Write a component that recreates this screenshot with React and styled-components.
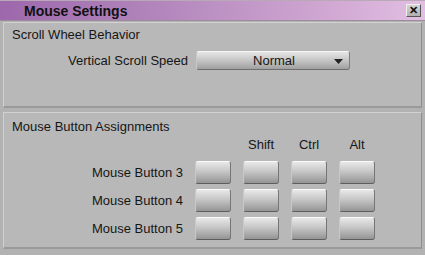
import React from "react";
import styled, { createGlobalStyle } from "styled-components";

const Global = createGlobalStyle`
  html, body { margin: 0; padding: 0; background: #b4b4b4; }
  body { font-family: "Liberation Sans", Arial, sans-serif; }
`;

const Window = styled.div`
  width: 425px;
  height: 255px;
  display: flex;
  flex-direction: column;
  background: #b2b2b2;
  box-sizing: border-box;
  overflow: hidden;
`;

const TitleBar = styled.div`
  height: 21px;
  box-sizing: border-box;
  border-top: 1px solid #b8a8b8;
  border-bottom: 1px solid #9c8c9c;
  background: linear-gradient(90deg, #9d68ac 0%, #b488bd 40%, #d2aad4 80%, #e2bfe2 100%);
  display: flex;
  align-items: center;
  justify-content: space-between;
  padding: 0 4px 0 24px;
`;

const Title = styled.span`
  font-weight: bold;
  font-size: 14px;
  color: #111;
`;

const CloseButton = styled.div`
  width: 15px;
  height: 13px;
  box-sizing: border-box;
  background: linear-gradient(#d4d4d4, #b0b0b0);
  border-top: 1px solid #efefef;
  border-left: 1px solid #efefef;
  border-right: 1px solid #555;
  border-bottom: 1px solid #555;
  display: flex;
  align-items: center;
  justify-content: center;
  font-size: 11px;
  font-weight: bold;
  line-height: 1;
  color: #111;
`;

const Body = styled.div`
  flex: 1;
  display: flex;
  flex-direction: column;
  gap: 4px;
  padding: 1px 3px 6px 3px;
`;

const Panel = styled.div`
  box-sizing: border-box;
  background: #b8b8b8;
  border-top: 1px solid #d2d2d2;
  border-left: 1px solid #d0d0d0;
  border-right: 1px solid #8e8e8e;
  border-bottom: 2px solid #9a9a9a;
  height: ${(p) => p.$h || "auto"};
  flex: ${(p) => (p.$grow ? 1 : "none")};
  padding: ${(p) => p.$pt || "5px"} 0 0 8px;
`;

const Heading = styled.div`
  font-size: 13px;
  line-height: 14px;
  color: #161616;
`;

const SpeedRow = styled.div`
  display: flex;
  align-items: center;
  margin-top: 9px;
`;

const Label = styled.div`
  width: ${(p) => p.$w || "auto"};
  text-align: right;
  font-size: 13px;
  line-height: 14px;
  color: #161616;
`;

const Dropdown = styled.div`
  margin-left: 8px;
  width: 154px;
  height: 19px;
  box-sizing: border-box;
  border-radius: 3px;
  background: linear-gradient(#e6e6e6 0%, #c8c8c8 45%, #a0a0a0 100%);
  border-top: 1px solid #f4f4f4;
  border-left: 1px solid #c8c8c8;
  border-right: 1px solid #7e7e7e;
  border-bottom: 1px solid #6e6e6e;
  display: flex;
  align-items: center;
  position: relative;
  font-size: 13px;
  color: #161616;
`;

const DropText = styled.span`
  flex: 1;
  text-align: center;
  padding-left: 2px;
`;

const Arrow = styled.svg`
  position: absolute;
  right: 6px;
  top: 7px;
`;

const Grid = styled.div`
  display: grid;
  grid-template-columns: 171px repeat(4, 36px);
  column-gap: 12px;
  row-gap: 5px;
  margin-top: 4px;
  align-items: center;
`;

const ColHead = styled.div`
  font-size: 13px;
  line-height: 14px;
  color: #161616;
  text-align: center;
  margin-bottom: 4px;
`;

const KeyButton = styled.div`
  height: 23px;
  box-sizing: border-box;
  border-radius: 3px;
  background: linear-gradient(#e8e8e8 0%, #c6c6c6 45%, #959595 100%);
  border-top: 1px solid #fafafa;
  border-left: 1px solid #c8c8c8;
  border-right: 1px solid #767676;
  border-bottom: 1px solid #5e5e5e;
`;

const rows = ["Mouse Button 3", "Mouse Button 4", "Mouse Button 5"];
const heads = ["", "Shift", "Ctrl", "Alt"];

export default function App() {
  return (
    <>
      <Global />
      <Window>
        <TitleBar>
          <Title>Mouse Settings</Title>
          <CloseButton>✕</CloseButton>
        </TitleBar>
        <Body>
          <Panel $h="86px">
            <Heading>Scroll Wheel Behavior</Heading>
            <SpeedRow>
              <Label $w="176px">Vertical Scroll Speed</Label>
              <Dropdown>
                <DropText>Normal</DropText>
                <Arrow width="9" height="5" viewBox="0 0 9 5">
                  <path d="M0 0 H9 L4.5 5 Z" fill="#222" />
                </Arrow>
              </Dropdown>
            </SpeedRow>
          </Panel>
          <Panel $grow $pt="7px">
            <Heading>Mouse Button Assignments</Heading>
            <Grid>
              <div />
              {heads.map((h, i) => (
                <ColHead key={i}>{h}</ColHead>
              ))}
              {rows.map((r) => (
                <React.Fragment key={r}>
                  <Label>{r}</Label>
                  <KeyButton />
                  <KeyButton />
                  <KeyButton />
                  <KeyButton />
                </React.Fragment>
              ))}
            </Grid>
          </Panel>
        </Body>
      </Window>
    </>
  );
}
